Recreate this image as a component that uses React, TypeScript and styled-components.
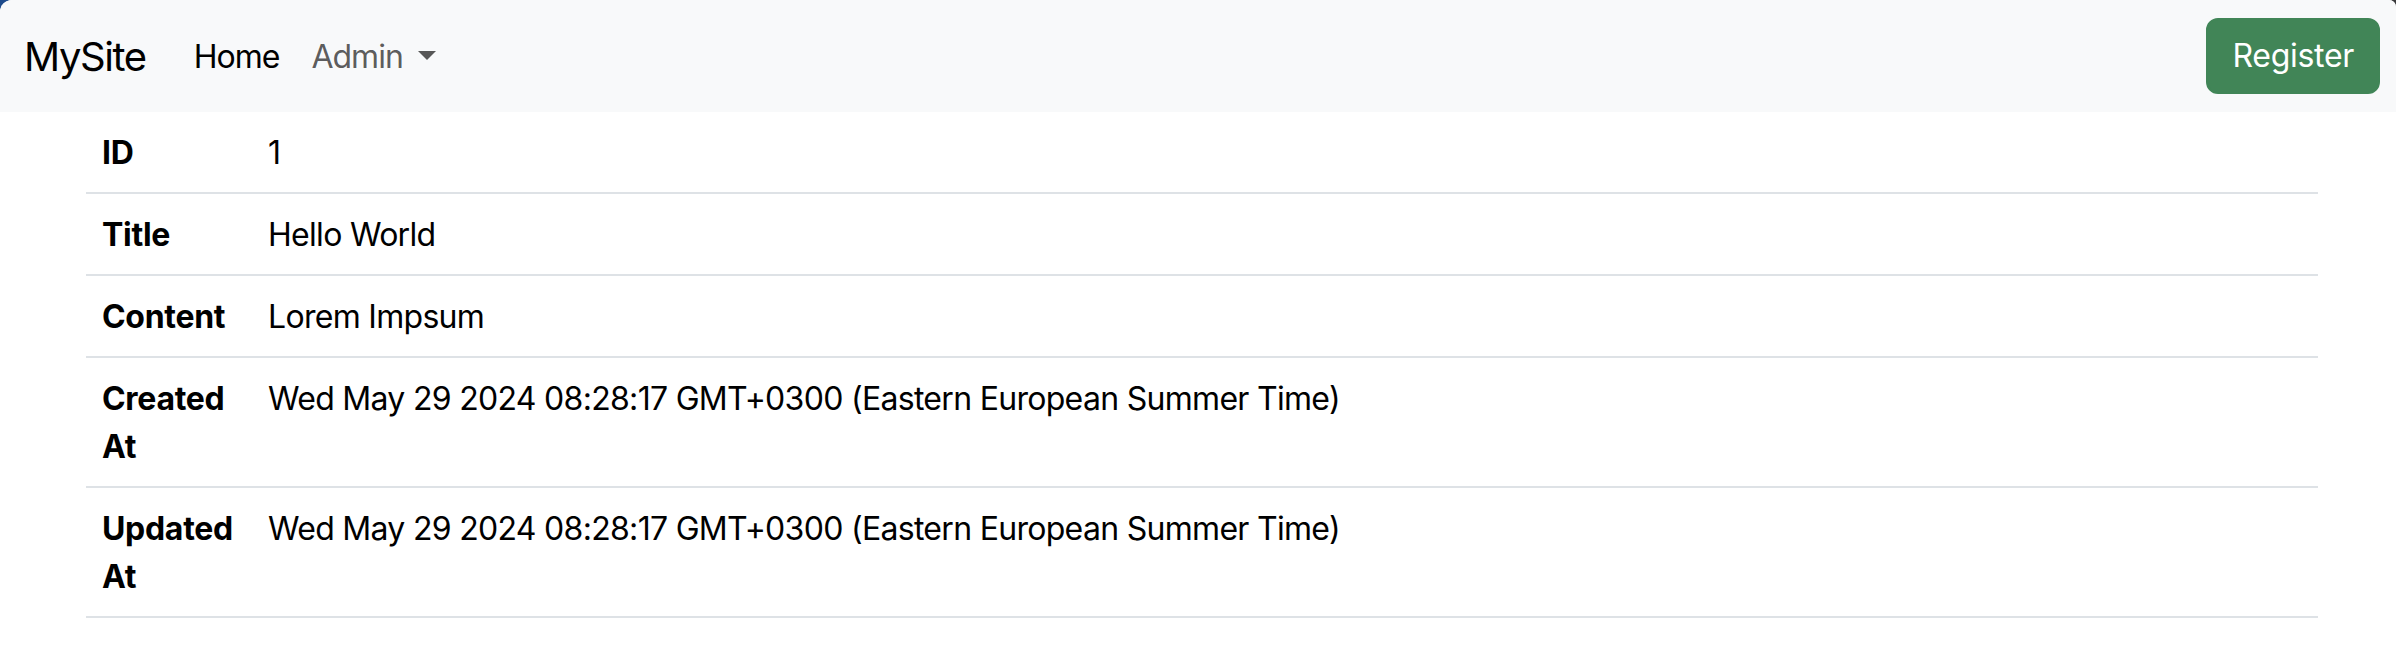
import React from "react";
import styled, { createGlobalStyle } from "styled-components";

const GlobalStyle = createGlobalStyle`
  html {
    background: linear-gradient(90deg, #1d4b8c 0%, #2b4a77 10%, #3c3c3e 90%, #3a3a3c 100%);
  }
  body {
    margin: 0;
    font-family: Inter, "Noto Sans", Roboto, sans-serif;
    color: #000;
    -webkit-font-smoothing: antialiased;
  }
  * { box-sizing: border-box; }
`;

const Page = styled.div`
  min-height: 664px;
  background: #ffffff;
  border-radius: 12px 7px 0 0;
  overflow: hidden;
`;

const Navbar = styled.nav`
  display: flex;
  align-items: center;
  justify-content: space-between;
  height: 112px;
  padding: 16px 16px 16px 24px;
  background: #f8f9fa;
`;

const NavLeft = styled.div`
  display: flex;
  align-items: center;
`;

const Brand = styled.a`
  font-size: 40px;
  line-height: 60px;
  padding: 11px 0 9px;
  margin-right: 32px;
  color: #000;
  text-decoration: none;
  letter-spacing: -1.4px;
`;

const NavList = styled.ul`
  display: flex;
  list-style: none;
  margin: 0;
  padding: 0;
`;

const NavLink = styled.a<{ $active?: boolean }>`
  display: flex;
  align-items: center;
  padding: 17px 16px 15px;
  font-size: 32px;
  line-height: 48px;
  letter-spacing: -1px;
  color: ${(p) => (p.$active ? "#000" : "rgba(0, 0, 0, 0.65)")};
  text-decoration: none;
`;

const Caret = styled.span`
  display: inline-block;
  margin-left: 15px;
  width: 0;
  height: 0;
  border-top: 9.6px solid rgba(0, 0, 0, 0.65);
  border-left: 9.6px solid transparent;
  border-right: 9.6px solid transparent;
  transform: translateY(-2px);
`;

const RegisterButton = styled.button`
  height: 76px;
  padding: 12px 24px;
  font-family: inherit;
  font-size: 32px;
  line-height: 48px;
  letter-spacing: -0.3px;
  color: #fff;
  background: #418557;
  border: 2px solid #418557;
  border-radius: 12px;
`;

const Main = styled.main`
  padding: 0 78px 0 86px;
`;

const DetailTable = styled.table`
  width: 100%;
  border-collapse: collapse;
  table-layout: fixed;
  vertical-align: top;
`;

const Row = styled.tr`
  border-bottom: 2px solid #dee2e6;
`;

const HeadCell = styled.th`
  width: 166px;
  padding: 17px 16px 15px;
  font-size: 32px;
  line-height: 48px;
  font-weight: 700;
  letter-spacing: -0.3px;
  text-align: left;
  vertical-align: top;
`;

const ValueCell = styled.td`
  padding: 17px 16px 15px;
  font-size: 32px;
  line-height: 48px;
  letter-spacing: -0.7px;
  vertical-align: top;
`;

const rows: [string, string][] = [
  ["ID", "1"],
  ["Title", "Hello World"],
  ["Content", "Lorem Impsum"],
  ["Created At", "Wed May 29 2024 08:28:17 GMT+0300 (Eastern European Summer Time)"],
  ["Updated At", "Wed May 29 2024 08:28:17 GMT+0300 (Eastern European Summer Time)"],
];

export default function App() {
  return (
    <>
      <GlobalStyle />
      <Page>
        <Navbar>
          <NavLeft>
            <Brand href="#">MySite</Brand>
            <NavList>
              <li>
                <NavLink href="#" $active>
                  Home
                </NavLink>
              </li>
              <li>
                <NavLink href="#">
                  Admin
                  <Caret />
                </NavLink>
              </li>
            </NavList>
          </NavLeft>
          <RegisterButton>Register</RegisterButton>
        </Navbar>
        <Main>
          <DetailTable>
            <tbody>
              {rows.map(([label, value]) => (
                <Row key={label}>
                  <HeadCell>{label}</HeadCell>
                  <ValueCell>{value}</ValueCell>
                </Row>
              ))}
            </tbody>
          </DetailTable>
        </Main>
      </Page>
    </>
  );
}
